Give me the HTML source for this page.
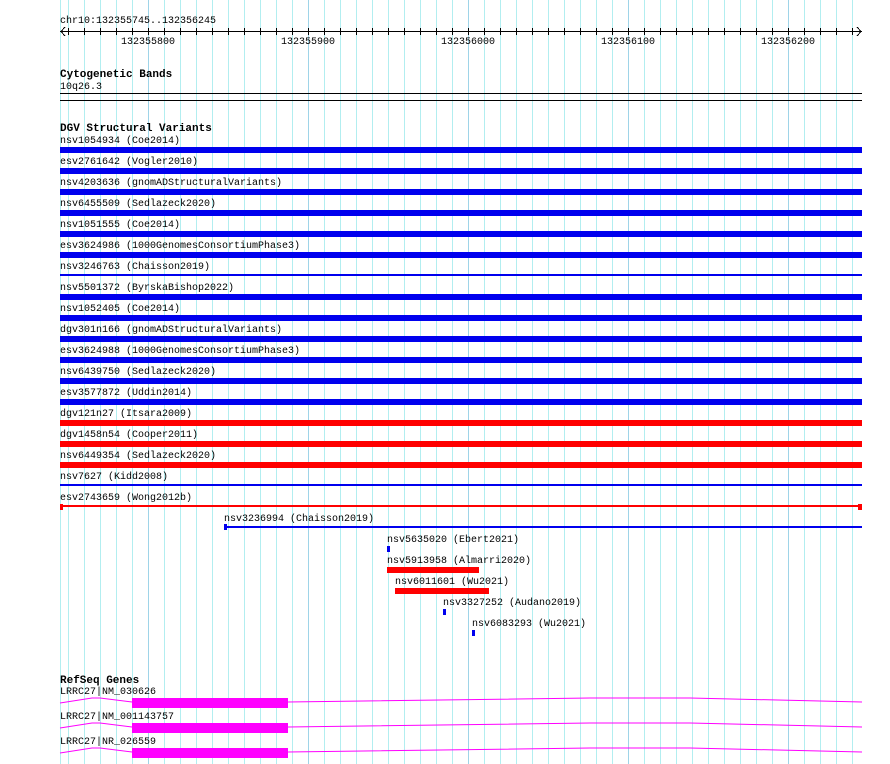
<!DOCTYPE html>
<html><head><meta charset="utf-8"><style>
body{margin:0;width:890px;height:764px;background:#fff;position:relative;overflow:hidden;font-family:"Liberation Mono",monospace;font-size:10px;color:#000}
.t{position:absolute;line-height:12px;white-space:pre;margin-top:2px}
.b{font-weight:bold;font-size:11px}
svg{position:absolute;left:0;top:0}
</style></head><body>
<svg width="890" height="764" shape-rendering="crispEdges">
<g stroke="#b2eef0" stroke-width="1">
<line x1="60.5" y1="0" x2="60.5" y2="764"/>
<line x1="68.5" y1="0" x2="68.5" y2="764"/><line x1="84.5" y1="0" x2="84.5" y2="764"/><line x1="100.5" y1="0" x2="100.5" y2="764"/><line x1="116.5" y1="0" x2="116.5" y2="764"/><line x1="132.5" y1="0" x2="132.5" y2="764"/>
<line x1="164.5" y1="0" x2="164.5" y2="764"/><line x1="180.5" y1="0" x2="180.5" y2="764"/><line x1="196.5" y1="0" x2="196.5" y2="764"/><line x1="212.5" y1="0" x2="212.5" y2="764"/><line x1="228.5" y1="0" x2="228.5" y2="764"/><line x1="244.5" y1="0" x2="244.5" y2="764"/><line x1="260.5" y1="0" x2="260.5" y2="764"/><line x1="276.5" y1="0" x2="276.5" y2="764"/><line x1="292.5" y1="0" x2="292.5" y2="764"/>
<line x1="324.5" y1="0" x2="324.5" y2="764"/><line x1="340.5" y1="0" x2="340.5" y2="764"/><line x1="356.5" y1="0" x2="356.5" y2="764"/><line x1="372.5" y1="0" x2="372.5" y2="764"/><line x1="388.5" y1="0" x2="388.5" y2="764"/><line x1="404.5" y1="0" x2="404.5" y2="764"/><line x1="420.5" y1="0" x2="420.5" y2="764"/><line x1="436.5" y1="0" x2="436.5" y2="764"/><line x1="452.5" y1="0" x2="452.5" y2="764"/>
<line x1="484.5" y1="0" x2="484.5" y2="764"/><line x1="500.5" y1="0" x2="500.5" y2="764"/><line x1="516.5" y1="0" x2="516.5" y2="764"/><line x1="532.5" y1="0" x2="532.5" y2="764"/><line x1="548.5" y1="0" x2="548.5" y2="764"/><line x1="564.5" y1="0" x2="564.5" y2="764"/><line x1="580.5" y1="0" x2="580.5" y2="764"/><line x1="596.5" y1="0" x2="596.5" y2="764"/><line x1="612.5" y1="0" x2="612.5" y2="764"/>
<line x1="644.5" y1="0" x2="644.5" y2="764"/><line x1="660.5" y1="0" x2="660.5" y2="764"/><line x1="676.5" y1="0" x2="676.5" y2="764"/><line x1="692.5" y1="0" x2="692.5" y2="764"/><line x1="708.5" y1="0" x2="708.5" y2="764"/><line x1="724.5" y1="0" x2="724.5" y2="764"/><line x1="740.5" y1="0" x2="740.5" y2="764"/><line x1="756.5" y1="0" x2="756.5" y2="764"/><line x1="772.5" y1="0" x2="772.5" y2="764"/>
<line x1="804.5" y1="0" x2="804.5" y2="764"/><line x1="820.5" y1="0" x2="820.5" y2="764"/><line x1="836.5" y1="0" x2="836.5" y2="764"/><line x1="852.5" y1="0" x2="852.5" y2="764"/>
</g>
<g stroke="#9ed4e8" stroke-width="1">
<line x1="148.5" y1="0" x2="148.5" y2="764"/><line x1="308.5" y1="0" x2="308.5" y2="764"/><line x1="468.5" y1="0" x2="468.5" y2="764"/><line x1="628.5" y1="0" x2="628.5" y2="764"/><line x1="788.5" y1="0" x2="788.5" y2="764"/>
</g>
<g stroke="#000" stroke-width="1" fill="none">
<line x1="60" y1="31.5" x2="862" y2="31.5"/>
<polyline points="65,27 61,31.5 65,36"/>
<polyline points="857,27 861,31.5 857,36"/>
<path d="M68.5 28v7M84.5 28v7M100.5 28v7M116.5 28v7M132.5 28v7M148.5 28v7M164.5 28v7M180.5 28v7M196.5 28v7M212.5 28v7M228.5 28v7M244.5 28v7M260.5 28v7M276.5 28v7M292.5 28v7M308.5 28v7M324.5 28v7M340.5 28v7M356.5 28v7M372.5 28v7M388.5 28v7M404.5 28v7M420.5 28v7M436.5 28v7M452.5 28v7M468.5 28v7M484.5 28v7M500.5 28v7M516.5 28v7M532.5 28v7M548.5 28v7M564.5 28v7M580.5 28v7M596.5 28v7M612.5 28v7M628.5 28v7M644.5 28v7M660.5 28v7M676.5 28v7M692.5 28v7M708.5 28v7M724.5 28v7M740.5 28v7M756.5 28v7M772.5 28v7M788.5 28v7M804.5 28v7M820.5 28v7M836.5 28v7M852.5 28v7"/>
<line x1="60" y1="93.5" x2="862" y2="93.5"/>
<line x1="60" y1="100.5" x2="862" y2="100.5"/>
</g>
<g fill="#0000ee">
<rect x="60" y="147" width="802" height="6"/>
<rect x="60" y="168" width="802" height="6"/>
<rect x="60" y="189" width="802" height="6"/>
<rect x="60" y="210" width="802" height="6"/>
<rect x="60" y="231" width="802" height="6"/>
<rect x="60" y="252" width="802" height="6"/>
<rect x="60" y="274" width="802" height="2"/>
<rect x="60" y="294" width="802" height="6"/>
<rect x="60" y="315" width="802" height="6"/>
<rect x="60" y="336" width="802" height="6"/>
<rect x="60" y="357" width="802" height="6"/>
<rect x="60" y="378" width="802" height="6"/>
<rect x="60" y="399" width="802" height="6"/>
<rect x="60" y="484" width="802" height="2"/>
<rect x="224" y="526" width="638" height="2"/>
<rect x="224" y="524" width="3" height="6"/>
<rect x="387" y="546" width="3" height="6"/>
<rect x="443" y="609" width="3" height="6"/>
<rect x="472" y="630" width="3" height="6"/>
</g>
<g fill="#ff0000">
<rect x="60" y="420" width="802" height="6"/>
<rect x="60" y="441" width="802" height="6"/>
<rect x="60" y="462" width="802" height="6"/>
<rect x="60" y="505" width="802" height="2"/>
<rect x="60" y="504" width="3" height="6"/>
<rect x="858" y="504" width="4" height="6"/>
<rect x="387" y="567" width="92" height="6"/>
<rect x="395" y="588" width="94" height="6"/>
</g>
<g fill="#ff00ff">
<rect x="132" y="698" width="156" height="10"/>
<rect x="132" y="723" width="156" height="10"/>
<rect x="132" y="748" width="156" height="10"/>
</g>
<g stroke="#ff00ff" stroke-width="1" fill="none" shape-rendering="auto">
<polyline points="60,703 92,698 100,698 132,702"/>
<polyline points="288,702 590,698 690,698 862,702"/>
<polyline points="60,728 92,723 100,723 132,727"/>
<polyline points="288,727 590,723 690,723 862,727"/>
<polyline points="60,753 92,748 100,748 132,752"/>
<polyline points="288,752 590,748 690,748 862,752"/>
</g>
</svg>
<div class="t" style="left:60px;top:14px">chr10:132355745..132356245</div>
<div class="t" style="left:121px;top:35px">132355800</div>
<div class="t" style="left:281px;top:35px">132355900</div>
<div class="t" style="left:441px;top:35px">132356000</div>
<div class="t" style="left:601px;top:35px">132356100</div>
<div class="t" style="left:761px;top:35px">132356200</div>
<div class="t b" style="left:60px;top:67px">Cytogenetic Bands</div>
<div class="t" style="left:60px;top:80px">10q26.3</div>
<div class="t b" style="left:60px;top:121px">DGV Structural Variants</div>
<div class="t" style="left:60px;top:134px">nsv1054934 (Coe2014)</div>
<div class="t" style="left:60px;top:155px">esv2761642 (Vogler2010)</div>
<div class="t" style="left:60px;top:176px">nsv4203636 (gnomADStructuralVariants)</div>
<div class="t" style="left:60px;top:197px">nsv6455509 (Sedlazeck2020)</div>
<div class="t" style="left:60px;top:218px">nsv1051555 (Coe2014)</div>
<div class="t" style="left:60px;top:239px">esv3624986 (1000GenomesConsortiumPhase3)</div>
<div class="t" style="left:60px;top:260px">nsv3246763 (Chaisson2019)</div>
<div class="t" style="left:60px;top:281px">nsv5501372 (ByrskaBishop2022)</div>
<div class="t" style="left:60px;top:302px">nsv1052405 (Coe2014)</div>
<div class="t" style="left:60px;top:323px">dgv301n166 (gnomADStructuralVariants)</div>
<div class="t" style="left:60px;top:344px">esv3624988 (1000GenomesConsortiumPhase3)</div>
<div class="t" style="left:60px;top:365px">nsv6439750 (Sedlazeck2020)</div>
<div class="t" style="left:60px;top:386px">esv3577872 (Uddin2014)</div>
<div class="t" style="left:60px;top:407px">dgv121n27 (Itsara2009)</div>
<div class="t" style="left:60px;top:428px">dgv1458n54 (Cooper2011)</div>
<div class="t" style="left:60px;top:449px">nsv6449354 (Sedlazeck2020)</div>
<div class="t" style="left:60px;top:470px">nsv7627 (Kidd2008)</div>
<div class="t" style="left:60px;top:491px">esv2743659 (Wong2012b)</div>
<div class="t" style="left:224px;top:512px">nsv3236994 (Chaisson2019)</div>
<div class="t" style="left:387px;top:533px">nsv5635020 (Ebert2021)</div>
<div class="t" style="left:387px;top:554px">nsv5913958 (Almarri2020)</div>
<div class="t" style="left:395px;top:575px">nsv6011601 (Wu2021)</div>
<div class="t" style="left:443px;top:596px">nsv3327252 (Audano2019)</div>
<div class="t" style="left:472px;top:617px">nsv6083293 (Wu2021)</div>
<div class="t b" style="left:60px;top:673px">RefSeq Genes</div>
<div class="t" style="left:60px;top:685px">LRRC27|NM_030626</div>
<div class="t" style="left:60px;top:710px">LRRC27|NM_001143757</div>
<div class="t" style="left:60px;top:735px">LRRC27|NR_026559</div>
</body></html>
